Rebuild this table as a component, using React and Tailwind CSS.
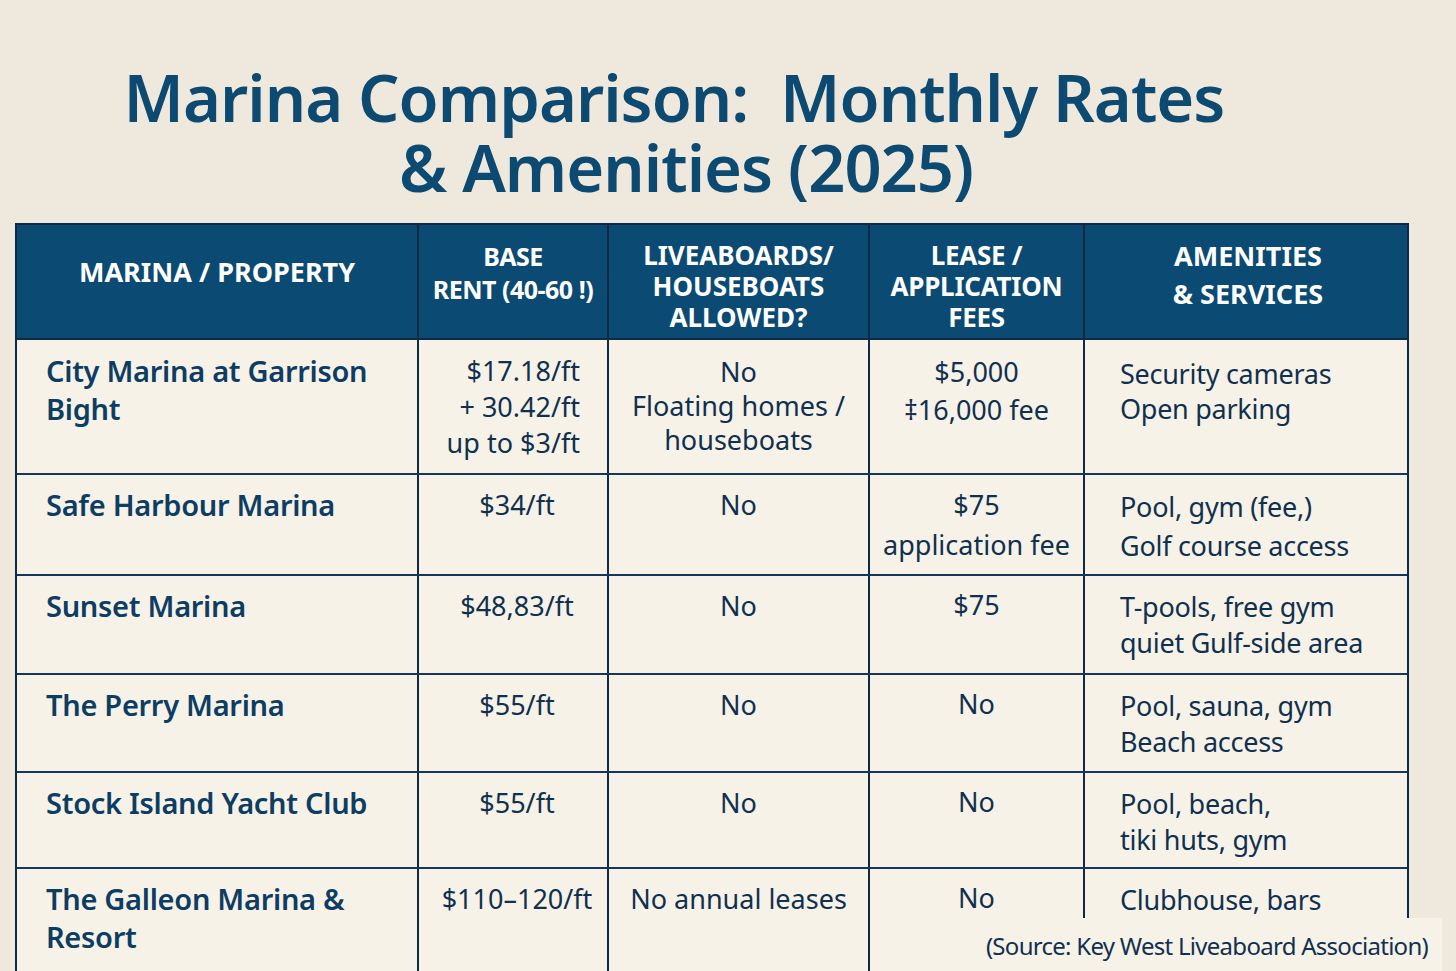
import React from 'react'

// ── Table data ────────────────────────────────────────────────────────────────
const ROWS = [
  {
    h: 'h-[135px]',
    first: true,
    name: ['City Marina at Garrison', 'Bight'],
    rent: ['$17.18/ft', '+ 30.42/ft', 'up to $3/ft'],
    rentAlign: 'text-right pr-[27px]',
    live: ['No', 'Floating homes /', 'houseboats'],
    lease: ['$5,000', '‡16,000 fee'],
    amen: ['Security cameras', 'Open parking'],
  },
  {
    h: 'h-[101px]',
    name: ['Safe Harbour Marina'],
    rent: ['$34/ft'],
    live: ['No'],
    lease: ['$75', 'application fee'],
    leaseWide: true,
    amen: ['Pool, gym (fee,)', 'Golf course access'],
  },
  {
    h: 'h-[99px]',
    name: ['Sunset Marina'],
    rent: ['$48,83/ft'],
    live: ['No'],
    lease: ['$75'],
    amen: ['T-pools, free gym', 'quiet Gulf-side area'],
  },
  {
    h: 'h-[98px]',
    name: ['The Perry Marina'],
    rent: ['$55/ft'],
    live: ['No'],
    lease: ['No'],
    amen: ['Pool, sauna, gym', 'Beach access'],
  },
  {
    h: 'h-[96px]',
    name: ['Stock Island Yacht Club'],
    rent: ['$55/ft'],
    live: ['No'],
    lease: ['No'],
    amen: ['Pool, beach,', 'tiki huts, gym'],
  },
  {
    h: 'h-[130px]',
    name: ['The Galleon Marina &', 'Resort'],
    rent: ['$110–120/ft'],
    live: ['No annual leases'],
    lease: ['No'],
    amen: ['Clubhouse, bars'],
  },
]

const HEADERS = [
  { lines: ['MARINA / PROPERTY'], pad: 'pt-[31px] leading-[31px] text-[27px]' },
  { lines: ['BASE', 'RENT (40-60 !)'], pad: 'pt-[15px] leading-[33px] text-[25px] tracking-[-0.02em]' },
  { lines: ['LIVEABOARDS/', 'HOUSEBOATS', 'ALLOWED?'], pad: 'pt-[15px] leading-[31px] text-[26px]' },
  { lines: ['LEASE /', 'APPLICATION', 'FEES'], pad: 'pt-[15px] leading-[31px] text-[26px] tracking-[-0.01em]' },
  { lines: ['AMENITIES', '& SERVICES'], pad: 'pt-[12px] leading-[38px] text-[27px]' },
]

const GRID = 'grid grid-cols-[402px_190px_261px_215px_326px]'
const FONT = { fontFamily: '"Noto Sans", "Open Sans", sans-serif' }

function Lines({ lines }) {
  return lines.map((l, i) => <div key={i} className="whitespace-nowrap">{l}</div>)
}

export default function App() {
  return (
    <div className="w-[1456px] h-[971px] overflow-hidden bg-[#efe8dc] relative" style={FONT}>
      {/* ── Title ── */}
      <div className="pt-[62px] pr-[108px] text-center text-[#0c4a72] font-semibold text-[65px] leading-[70px] tracking-[-0.015em]">
        <div>Marina Comparison:&nbsp; Monthly Rates</div>
        <div className="pl-[24px]">&amp; Amenities (2025)</div>
      </div>

      {/* ── Table ── */}
      <div className="ml-[15px] mt-[21px] w-[1394px] border-2 border-[#0f2a42] border-b-0 bg-[#f7f2e8]">
        {/* Header */}
        <div className={`${GRID} h-[115px] bg-[#0b4a72] text-white font-bold border-b-2 border-[#0f2a42]`}>
          {HEADERS.map((c, i) => (
            <div
              key={i}
              className={`flex flex-col items-center text-center ${c.pad} ${i < 4 ? 'border-r-2 border-[#0f2a42]' : ''}`}
            >
              <Lines lines={c.lines} />
            </div>
          ))}
        </div>

        {/* Rows */}
        {ROWS.map((r, ri) => (
          <div key={ri} className={`${GRID} ${r.h} ${ri < ROWS.length - 1 ? 'border-b-2 border-[#14385a]' : ''} text-[#10304f] text-[27px]`}>
            <div className={`border-r-2 border-[#0f2a42] pl-[29px] ${r.first ? 'pt-[12px]' : 'pt-[11px]'} font-semibold text-[#0d3d63] text-[29px] leading-[38px] tracking-[-0.01em]`}>
              <Lines lines={r.name} />
            </div>
            <div className={`border-r-2 border-[#0f2a42] leading-[36px] ${r.first ? 'pt-[13px]' : 'pt-[12px]'} ${r.rentAlign || 'text-center pl-[8px]'}`}>
              <Lines lines={r.rent} />
            </div>
            <div className={`border-r-2 border-[#0f2a42] leading-[34px] text-center ${r.first ? 'pt-[15px]' : 'pt-[13px]'}`}>
              <Lines lines={r.live} />
            </div>
            <div className={`border-r-2 border-[#0f2a42] text-center ${r.leaseWide ? 'leading-[40px] pt-[10px]' : r.first ? 'leading-[38px] pt-[13px]' : 'leading-[38px] pt-[10px]'}`}>
              <Lines lines={r.lease} />
            </div>
            <div className={`pl-[35px] tracking-[-0.01em] ${r.first ? 'pt-[16px] leading-[35px]' : r.leaseWide ? 'pt-[12px] leading-[39px]' : 'pt-[13px] leading-[36px]'}`}>
              <Lines lines={r.amen} />
            </div>
          </div>
        ))}
      </div>

      {/* ── Source note ── */}
      <div className="absolute left-[980px] top-[918px] w-[462px] h-[53px] bg-[#f7f2e8] flex items-start justify-end pr-[14px] pt-[12px] text-[#10304f] text-[24px] tracking-[-0.03em] leading-[32px] whitespace-nowrap">
        (Source: Key West Liveaboard Association)
      </div>
    </div>
  )
}
